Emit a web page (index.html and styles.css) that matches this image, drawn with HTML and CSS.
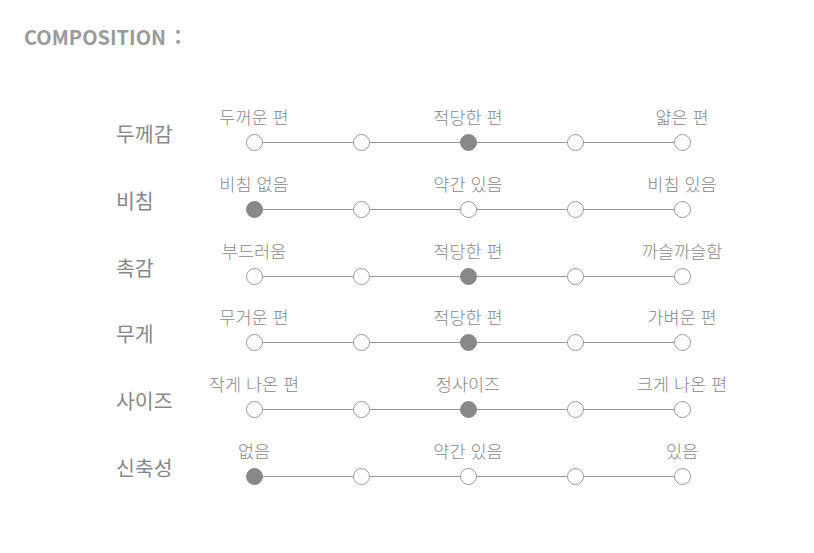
FILE: index.html
```html
<!DOCTYPE html>
<html lang="ko">
<head>
<meta charset="utf-8">
<link rel="stylesheet" href="styles.css">
</head>
<body>
<div class="page">
  <h1 class="title">COMPOSITION :</h1>
  <div class="rows">
    <div class="row">
      <div class="cat">두께감</div>
      <div class="scale">
        <div class="stop"><span class="opt">두꺼운 편</span><span class="dot"></span></div>
        <div class="stop"><span class="opt"></span><span class="dot"></span></div>
        <div class="stop"><span class="opt">적당한 편</span><span class="dot on"></span></div>
        <div class="stop"><span class="opt"></span><span class="dot"></span></div>
        <div class="stop"><span class="opt">얇은 편</span><span class="dot"></span></div>
      </div>
    </div>
    <div class="row">
      <div class="cat">비침</div>
      <div class="scale">
        <div class="stop"><span class="opt">비침 없음</span><span class="dot on"></span></div>
        <div class="stop"><span class="opt"></span><span class="dot"></span></div>
        <div class="stop"><span class="opt">약간 있음</span><span class="dot"></span></div>
        <div class="stop"><span class="opt"></span><span class="dot"></span></div>
        <div class="stop"><span class="opt">비침 있음</span><span class="dot"></span></div>
      </div>
    </div>
    <div class="row">
      <div class="cat">촉감</div>
      <div class="scale">
        <div class="stop"><span class="opt">부드러움</span><span class="dot"></span></div>
        <div class="stop"><span class="opt"></span><span class="dot"></span></div>
        <div class="stop"><span class="opt">적당한 편</span><span class="dot on"></span></div>
        <div class="stop"><span class="opt"></span><span class="dot"></span></div>
        <div class="stop"><span class="opt">까슬까슬함</span><span class="dot"></span></div>
      </div>
    </div>
    <div class="row">
      <div class="cat">무게</div>
      <div class="scale">
        <div class="stop"><span class="opt">무거운 편</span><span class="dot"></span></div>
        <div class="stop"><span class="opt"></span><span class="dot"></span></div>
        <div class="stop"><span class="opt">적당한 편</span><span class="dot on"></span></div>
        <div class="stop"><span class="opt"></span><span class="dot"></span></div>
        <div class="stop"><span class="opt">가벼운 편</span><span class="dot"></span></div>
      </div>
    </div>
    <div class="row">
      <div class="cat">사이즈</div>
      <div class="scale">
        <div class="stop"><span class="opt">작게 나온 편</span><span class="dot"></span></div>
        <div class="stop"><span class="opt"></span><span class="dot"></span></div>
        <div class="stop"><span class="opt">정사이즈</span><span class="dot on"></span></div>
        <div class="stop"><span class="opt"></span><span class="dot"></span></div>
        <div class="stop"><span class="opt">크게 나온 편</span><span class="dot"></span></div>
      </div>
    </div>
    <div class="row">
      <div class="cat">신축성</div>
      <div class="scale">
        <div class="stop"><span class="opt">없음</span><span class="dot on"></span></div>
        <div class="stop"><span class="opt"></span><span class="dot"></span></div>
        <div class="stop"><span class="opt">약간 있음</span><span class="dot"></span></div>
        <div class="stop"><span class="opt"></span><span class="dot"></span></div>
        <div class="stop"><span class="opt">있음</span><span class="dot"></span></div>
      </div>
    </div>
  </div>
</div>
</body>
</html>
```

FILE: styles.css
```css
html, body {
  margin: 0;
  padding: 0;
  background: #fff;
}

body {
  font-family: "Noto Sans CJK KR", "Noto Sans", sans-serif;
  color: #888;
}

.page {
  padding: 24px 0 0 24px;
}

.title {
  margin: 0;
  font-size: 20px;
  line-height: 26px;
  font-weight: 700;
  color: #9a9a9a;
  word-spacing: 3px;
}

.rows {
  margin-top: 57px;
  padding-left: 92px;
  display: flex;
  flex-direction: column;
  gap: 22.8px;
}

.row {
  display: grid;
  grid-template-columns: 84.5px 535px;
}

.cat {
  font-size: 20.5px;
  line-height: 24px;
  padding-top: 14px;
  color: #888;
  font-weight: 400;
}

.scale {
  position: relative;
  display: grid;
  grid-template-columns: repeat(5, 107px);
}

.scale::before {
  content: "";
  position: absolute;
  left: 53.5px;
  right: 53.5px;
  top: 35px;
  height: 1px;
  background: #999;
}

.stop {
  display: flex;
  flex-direction: column;
  align-items: center;
}

.opt {
  height: 20px;
  line-height: 20px;
  font-size: 17.5px;
  font-weight: 300;
  color: #888;
  white-space: nowrap;
}

.dot {
  position: relative;
  box-sizing: border-box;
  width: 17px;
  height: 17px;
  margin-top: 7px;
  border-radius: 50%;
  border: 1px solid #999;
  background: #fff;
}

.dot.on {
  background: #888;
  border-color: #888;
}
```
